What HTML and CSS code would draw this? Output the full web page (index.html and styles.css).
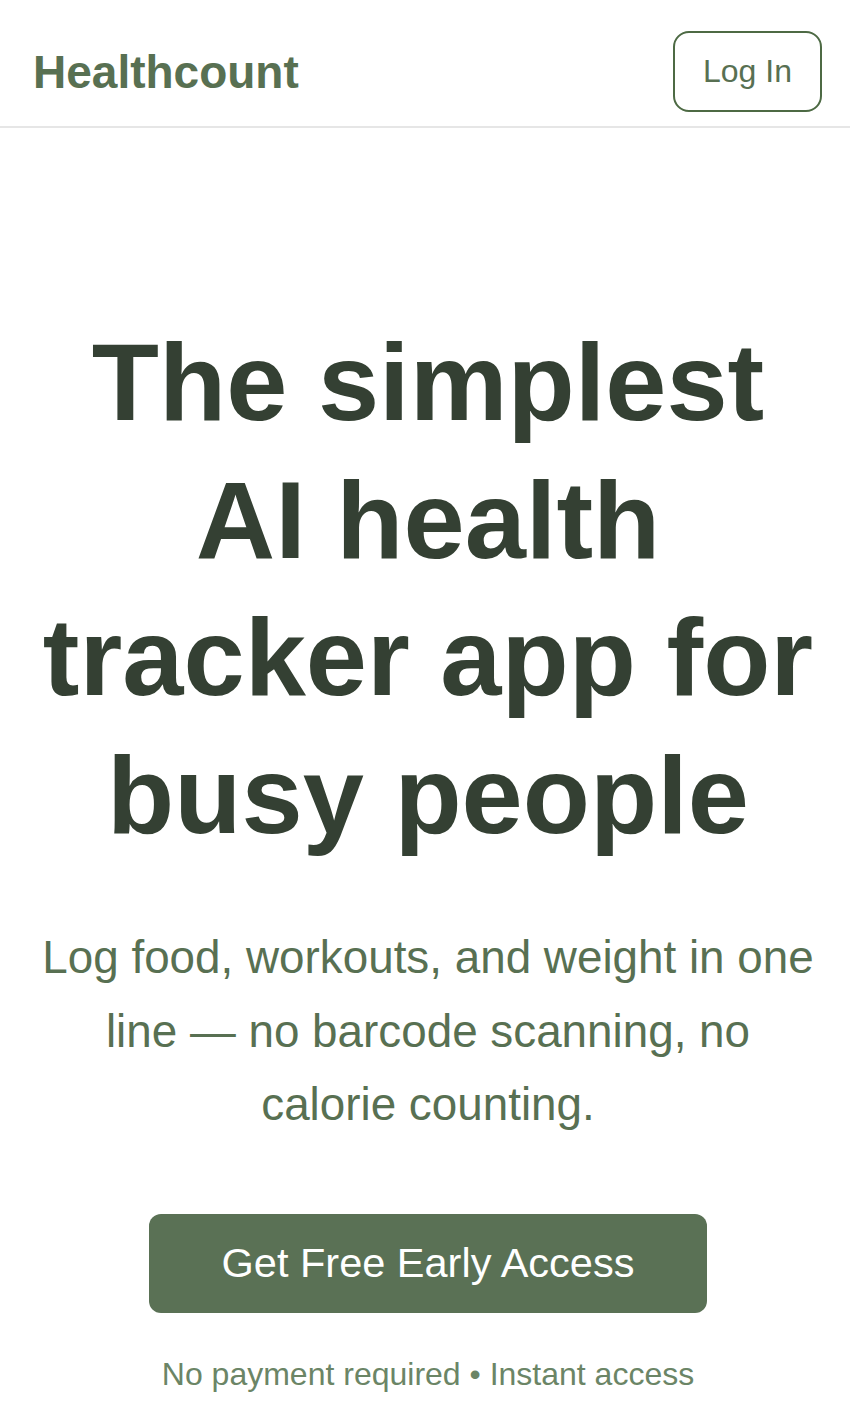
FILE: index.html
```html
<!DOCTYPE html>
<html lang="en">
<head>
<meta charset="utf-8">
<title>Healthcount</title>
<link rel="stylesheet" href="styles.css">
</head>
<body>
<header class="site-header">
  <a class="logo" href="#">Healthcount</a>
  <a class="login-btn" href="#">Log In</a>
</header>
<main class="hero">
  <h1 class="hero-title">The simplest AI health tracker app for busy people</h1>
  <p class="hero-sub">Log food, workouts, and weight in one line — no barcode scanning, no calorie counting.</p>
  <a class="cta-btn" href="#">Get Free Early Access</a>
  <p class="cta-note">No payment required • Instant access</p>
</main>
</body>
</html>
```
FILE: styles.css
```css
html, body {
  margin: 0;
  padding: 0;
  background: #ffffff;
  font-family: "Liberation Sans", Arial, sans-serif;
}

.site-header {
  display: flex;
  align-items: center;
  justify-content: space-between;
  padding: 31px 28px 14px 33px;
  border-bottom: 2px solid #e6e6e6;
}

.logo {
  font-size: 46px;
  font-weight: 700;
  color: #587052;
  text-decoration: none;
  line-height: 1;
}

.login-btn {
  box-sizing: border-box;
  display: flex;
  align-items: center;
  justify-content: center;
  width: 149px;
  height: 81px;
  border: 2px solid #4d6a44;
  border-radius: 16px;
  font-size: 32px;
  color: #587052;
  text-decoration: none;
}

.hero {
  display: flex;
  flex-direction: column;
  align-items: center;
  text-align: center;
  padding: 185px 29px 0 35px;
}

.hero-title {
  margin: 0;
  font-size: 110px;
  line-height: 137.5px;
  font-weight: 700;
  color: #344033;
}

.hero-sub {
  margin: 58px 0 0;
  font-size: 45.8px;
  line-height: 73.6px;
  color: #587052;
}

.cta-btn {
  box-sizing: border-box;
  margin-top: 72px;
  display: flex;
  align-items: center;
  justify-content: center;
  height: 99px;
  padding: 0 73px;
  background: #5a7155;
  border-radius: 12px;
  font-size: 41.5px;
  color: #ffffff;
  text-decoration: none;
}

.cta-note {
  margin: 37px 0 0;
  font-size: 32px;
  line-height: 48px;
  color: #6b8566;
}
```
